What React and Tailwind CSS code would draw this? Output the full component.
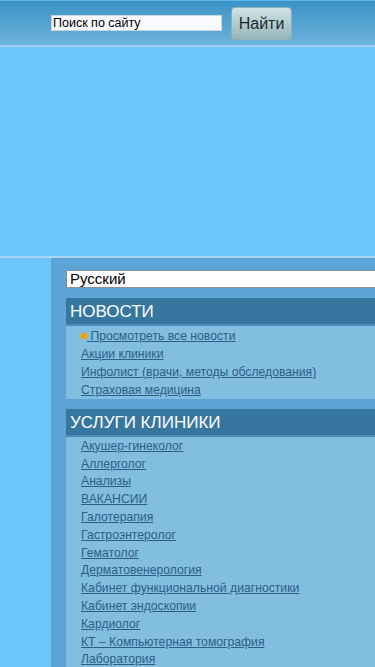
export default function App() {
  const news = ['Акции клиники', 'Инфолист (врачи, методы обследования)', 'Страховая медицина']
  const services = [
    'Акушер-гинеколог',
    'Аллерголог',
    'Анализы',
    'ВАКАНСИИ',
    'Галотерапия',
    'Гастроэнтеролог',
    'Гематолог',
    'Дерматовенерология',
    'Кабинет функциональной диагностики',
    'Кабинет эндоскопии',
    'Кардиолог',
    'КТ – Компьютерная томография',
    'Лаборатория',
  ]

  return (
    <div className="w-[375px] h-[667px] overflow-hidden bg-[#6cc6fa] font-['Liberation_Sans',Arial,sans-serif]">
      {/* Header */}
      <div className="h-[47px] border-t border-[#5cb6ea] border-b-2 border-b-[#9fd0ee] bg-gradient-to-b from-[#3b93c6] to-[#6cb4dc] flex items-start">
        <div className="ml-[51px] mt-[14px] w-[171px] h-[16px] bg-[#f8fafd] border border-[#c7d3de] text-[12.5px] leading-[14px] text-black pl-[1px]">
          Поиск по сайту
        </div>
        <button className="ml-[9px] mt-[6px] w-[61px] h-[33px] rounded-[4px] border border-[#8fb0b6] bg-gradient-to-b from-[#cfe2e4] to-[#97b6ba] text-[16px] text-[#1d2a2e]">
          Найти
        </button>
      </div>

      {/* Banner area */}
      <div className="h-[211px] border-b-2 border-[#a6d6f2]" />

      {/* Sidebar */}
      <div className="flex">
        <div className="w-[51px] shrink-0" />
        <div className="flex-1 bg-[#5ca4d6] pl-[15px] pt-[12px]">
          <div className="h-[18px] bg-white border border-[#8a8f96] border-r-0 text-[15px] leading-[16px] pl-[3px] text-black">
            Русский
          </div>

          <div className="mt-[10px] h-[28px] bg-[#36769f] border-b-2 border-[#4a8bb5] text-white text-[17px] leading-[28px] pl-[4px]">
            НОВОСТИ
          </div>
          <div className="bg-[#82bee0] pl-[15px] pt-[1px]">
            <div className="h-[18px] flex items-center text-[12.2px] text-[#2c5e86]">
              <span className="inline-block w-[6px] h-[6px] rounded-[1px] bg-[#f8a000]" />
              <span className="underline">&nbsp;Просмотреть все новости</span>
            </div>
            {news.map((t) => (
              <div key={t} className="h-[18px] flex items-center text-[12.2px] text-[#2c5e86] underline">
                {t}
              </div>
            ))}
          </div>

          <div className="mt-[10px] h-[28px] bg-[#36769f] border-b-2 border-[#4a8bb5] text-white text-[17px] leading-[28px] pl-[4px]">
            УСЛУГИ КЛИНИКИ
          </div>
          <div className="bg-[#82bee0] pl-[15px]">
            {services.map((t) => (
              <div key={t} className="h-[17.8px] flex items-center text-[12.2px] text-[#2c5e86] underline">
                {t}
              </div>
            ))}
          </div>
        </div>
      </div>
    </div>
  )
}
